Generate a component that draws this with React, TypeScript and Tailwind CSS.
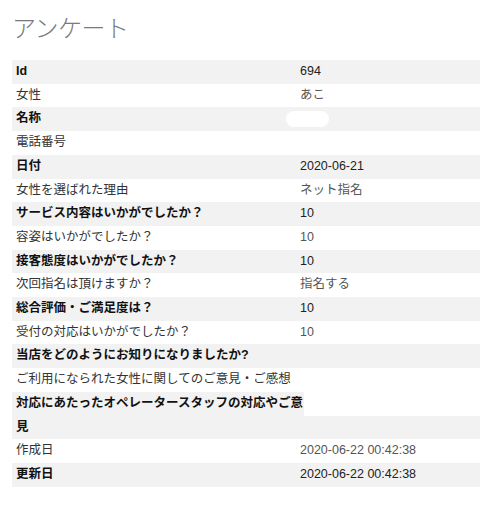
import React from "react";

type Row = { label: string; value?: string; blur?: boolean; split?: boolean };

const rows: Row[] = [
  { label: "Id", value: "694" },
  { label: "女性", value: "あこ" },
  { label: "名称", blur: true },
  { label: "電話番号" },
  { label: "日付", value: "2020-06-21" },
  { label: "女性を選ばれた理由", value: "ネット指名" },
  { label: "サービス内容はいかがでしたか？", value: "10" },
  { label: "容姿はいかがでしたか？", value: "10" },
  { label: "接客態度はいかがでしたか？", value: "10" },
  { label: "次回指名は頂けますか？", value: "指名する" },
  { label: "総合評価・ご満足度は？", value: "10" },
  { label: "受付の対応はいかがでしたか？", value: "10" },
  { label: "当店をどのようにお知りになりましたか?" },
  { label: "ご利用になられた女性に関してのご意見・ご感想" },
  { label: "対応にあたったオペレータースタッフの対応やご意見", split: true },
  { label: "作成日", value: "2020-06-22 00:42:38" },
  { label: "更新日", value: "2020-06-22 00:42:38" },
];

export default function App() {
  return (
    <div
      className="w-[480px] h-[508px] bg-white overflow-hidden"
      style={{ fontFamily: '"Liberation Sans", "Noto Sans CJK JP", sans-serif' }}
    >
      <div className="pl-3 pt-[13px]">
        <h1 className="text-[24px] leading-[32px] font-light text-[#7a7a7a] tracking-[-0.5px]">
          アンケート
        </h1>
        <div className="mt-[15px] flex flex-col text-[12.5px]">
          {rows.map((r, i) => {
            const odd = i % 2 === 0;
            const bg = odd ? "bg-[#f2f2f2]" : "bg-white";
            return (
              <div key={i} className={`flex ${bg}`}>
                <div
                  className={`w-[292px] shrink-0 pl-1 leading-[23.7px] ${
                    odd ? "font-bold text-[#111]" : "font-normal text-[#333]"
                  }`}
                >
                  {r.label}
                </div>
                {r.split ? (
                  <div className="flex-1 flex flex-col">
                    <div className="h-[23.7px] bg-white" />
                    <div className="h-[23.7px] bg-[#f2f2f2]" />
                  </div>
                ) : (
                  <div
                    className={`flex-1 -ml-1 leading-[23.7px] flex items-center ${
                      odd ? "text-[#222]" : "text-[#555]"
                    }`}
                  >
                    {r.blur ? (
                      <div className="-ml-[14px] w-[43px] h-[16px] rounded-full bg-white" />
                    ) : (
                      r.value
                    )}
                  </div>
                )}
              </div>
            );
          })}
        </div>
      </div>
    </div>
  );
}
